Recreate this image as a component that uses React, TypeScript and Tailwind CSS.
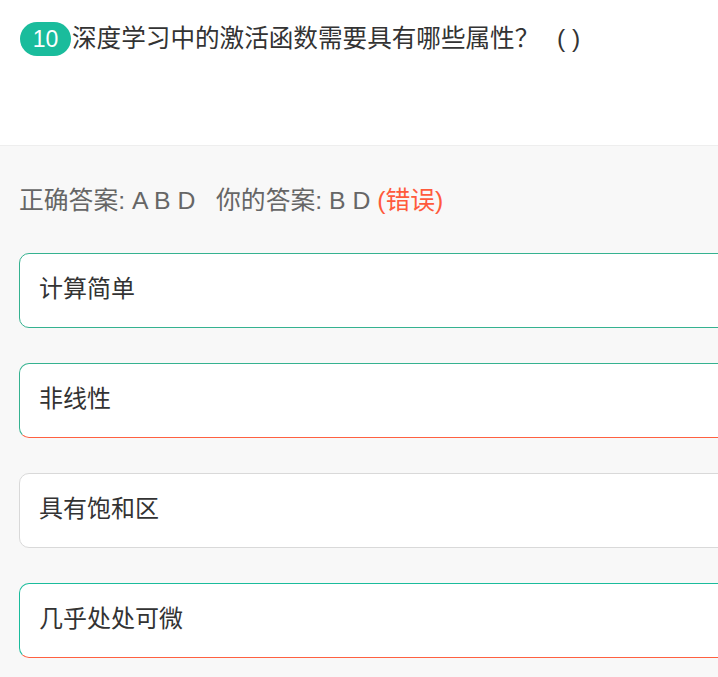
import React from "react";

interface Option {
  key: string;
  text: string;
  border: string;
}

const options: Option[] = [
  { key: "A", text: "计算简单", border: "border-[#35b290]" },
  { key: "B", text: "非线性", border: "border-[#35b290] border-b-[#ff6040]" },
  { key: "C", text: "具有饱和区", border: "border-[#d9d9d9]" },
  { key: "D", text: "几乎处处可微", border: "border-[#1abc9c] border-b-[#ff6040]" },
];

const App: React.FC = () => {
  return (
    <div
      className="min-h-[677px] overflow-hidden bg-[#f8f8f8]"
      style={{ fontFamily: '"Liberation Sans", "Noto Sans CJK SC", sans-serif' }}
    >
      {/* question */}
      <div className="h-[146px] bg-white border-b border-[#eeeeee] pl-[20px] pt-[22px]">
        <div className="flex items-center">
          <span className="flex h-[34px] w-[51px] items-center justify-center rounded-full bg-[#1abc9c] text-[23px] text-white">
            10
          </span>
          <span className="ml-[1px] text-[24.6px] leading-[34px] text-[#333333] whitespace-pre">
            深度学习中的激活函数需要具有哪些属性？  <span className="ml-[4px]">( )</span>
          </span>
        </div>
      </div>

      {/* answer */}
      <div className="pl-[19px] pt-[38px] text-[24.8px] leading-[34px] text-[#666666] whitespace-pre">
        正确答案: A B D   你的答案: B D <span className="text-[#ff5a3c]">(错误)</span>
      </div>

      {/* options */}
      <div className="ml-[19px] mr-[-30px] mt-[35px] flex flex-col gap-[35px]">
        {options.map((o) => (
          <div
            key={o.key}
            className={`flex h-[75px] items-center rounded-[10px] border bg-white pb-[3px] pl-[19px] text-[24px] text-[#333333] ${o.border}`}
          >
            {o.text}
          </div>
        ))}
      </div>
    </div>
  );
};

export default App;
